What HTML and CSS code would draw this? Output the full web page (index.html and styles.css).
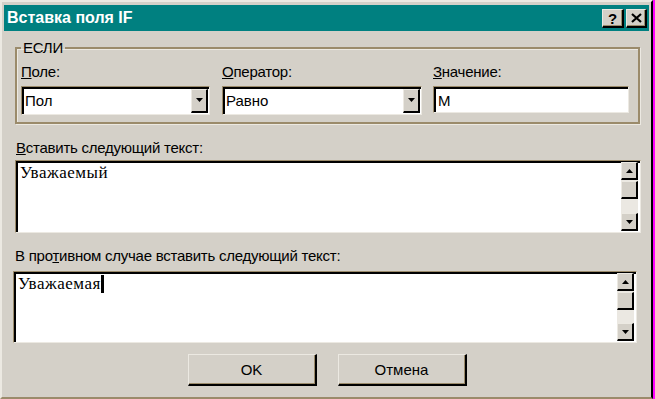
FILE: index.html
```html
<!DOCTYPE html>
<html lang="ru">

<head>
    <meta charset="UTF-8">
    <title>Вставка поля IF</title>
    <link rel="stylesheet" href="styles.css">
</head>

<body>
    <div class="screen">
        <div class="window">
            <div class="titlebar">
                <span class="title">Вставка поля IF</span>
                <div class="title-buttons">
                    <button class="tbtn tbtn-help">?</button>
                    <button class="tbtn tbtn-close">
                        <svg width="11" height="10" viewBox="0 0 11 10">
                            <path d="M1 1 L10 9 M10 1 L1 9" stroke="#000" stroke-width="2.2" fill="none" />
                        </svg>
                    </button>
                </div>
            </div>

            <div class="dialog-body">
                <fieldset class="group">
                    <legend>ЕСЛИ</legend>
                    <div class="fields">
                        <div class="field">
                            <label><u>П</u>оле:</label>
                            <div class="combo sunken">
                                <span class="combo-value">Пол</span>
                                <span class="drop-btn">
                                    <svg width="7" height="4" viewBox="0 0 7 4"><path d="M0 0 H7 L3.5 4 Z" fill="#000" /></svg>
                                </span>
                            </div>
                        </div>
                        <div class="field">
                            <label><u>О</u>ператор:</label>
                            <div class="combo sunken">
                                <span class="combo-value">Равно</span>
                                <span class="drop-btn">
                                    <svg width="7" height="4" viewBox="0 0 7 4"><path d="M0 0 H7 L3.5 4 Z" fill="#000" /></svg>
                                </span>
                            </div>
                        </div>
                        <div class="field">
                            <label><u>З</u>начение:</label>
                            <div class="edit sunken">М</div>
                        </div>
                    </div>
                </fieldset>

                <label class="block-label label-then"><u>В</u>ставить следующий текст:</label>
                <div class="memo memo-then sunken">
                    <div class="memo-text">Уважаемый</div>
                    <div class="scrollbar">
                        <span class="sb-btn">
                            <svg width="7" height="4" viewBox="0 0 7 4"><path d="M0 4 H7 L3.5 0 Z" fill="#000" /></svg>
                        </span>
                        <span class="sb-btn sb-thumb"></span>
                        <span class="sb-track"></span>
                        <span class="sb-btn">
                            <svg width="7" height="4" viewBox="0 0 7 4"><path d="M0 0 H7 L3.5 4 Z" fill="#000" /></svg>
                        </span>
                    </div>
                </div>

                <label class="block-label label-else">В про<u>т</u>ивном случае вставить следующий текст:</label>
                <div class="memo memo-else sunken">
                    <div class="memo-text">Уважаемая<span class="caret"></span></div>
                    <div class="scrollbar">
                        <span class="sb-btn">
                            <svg width="7" height="4" viewBox="0 0 7 4"><path d="M0 4 H7 L3.5 0 Z" fill="#000" /></svg>
                        </span>
                        <span class="sb-btn sb-thumb"></span>
                        <span class="sb-track"></span>
                        <span class="sb-btn">
                            <svg width="7" height="4" viewBox="0 0 7 4"><path d="M0 0 H7 L3.5 4 Z" fill="#000" /></svg>
                        </span>
                    </div>
                </div>

                <div class="actions">
                    <button class="btn">OK</button>
                    <button class="btn">Отмена</button>
                </div>
            </div>
        </div>
    </div>
</body>

</html>
```

FILE: styles.css
```css
body {
    margin: 0;
    padding: 0;
    font-family: 'Liberation Sans', Arial, sans-serif;
    font-size: 15px;
    letter-spacing: -0.25px;
    color: #000;
    background-color: #d4d0c8;
}

.screen {
    width: 655px;
    height: 399px;
    display: flex;
    border-right: 2px solid #ff00ff;
    box-sizing: border-box;
}

.window {
    width: 653px;
    height: 399px;
    box-sizing: border-box;
    background-color: #d4d0c8;
    border-top: 2px solid #ece9e2;
    border-left: 2px solid #ece9e2;
    border-right: 2px solid #000;
    border-bottom: 2px solid #9b8b6b;
    padding: 3px 2px 0 2px;
    display: flex;
    flex-direction: column;
}

.titlebar {
    height: 26px;
    background-color: #008080;
    display: flex;
    align-items: center;
    justify-content: space-between;
    padding: 0 2px 0 3px;
}

.title {
    color: #fff;
    font-weight: bold;
    font-size: 16px;
    letter-spacing: 0;
}

.title-buttons {
    display: flex;
    gap: 2px;
    margin-top: 1px;
}

.tbtn {
    width: 22px;
    height: 19px;
    padding: 0;
    margin: 0;
    background-color: #d4d0c8;
    border-style: solid;
    border-width: 1px 2px 2px 1px;
    border-color: #ece9e2 #000 #000 #ece9e2;
    box-shadow: inset -1px -1px 0 #9b8b6b;
    display: flex;
    align-items: center;
    justify-content: center;
    font-family: 'Liberation Sans', Arial, sans-serif;
    font-weight: bold;
    font-size: 15px;
    line-height: 1;
}

.tbtn-close {
    width: 21px;
}

.dialog-body {
    padding: 9px 10px 0 11px;
    display: flex;
    flex-direction: column;
    align-items: flex-start;
}

.group {
    width: 624px;
    box-sizing: border-box;
    margin: 0;
    padding: 7px 9px 7px 4px;
    border: 2px solid #9b8b6b;
    box-shadow: inset 1px 1px 0 #ece9e2, 1px 1px 0 #ece9e2;
}

.group legend {
    padding: 0 2px;
    line-height: 16px;
}

.fields {
    display: grid;
    grid-template-columns: 189px 200px 195px;
    column-gap: 12px;
    align-items: start;
}

.fields .field:last-child {
    margin-left: -1px;
}

.field label {
    display: block;
    line-height: 17px;
    margin-bottom: 6px;
}

.sunken {
    box-sizing: border-box;
    background-color: #fff;
    border: 1px solid;
    border-color: #9b8b6b #ece9e2 #ece9e2 #9b8b6b;
    box-shadow: inset 2px 2px 0 #000;
}

.combo {
    height: 29px;
    display: flex;
    align-items: center;
    padding: 2px 1px 2px 3px;
}

.combo-value {
    flex: 1;
    letter-spacing: 0;
}

.drop-btn {
    width: 17px;
    height: 24px;
    box-sizing: border-box;
    background-color: #d4d0c8;
    border-style: solid;
    border-width: 1px 2px 2px 1px;
    border-color: #ece9e2 #000 #000 #ece9e2;
    display: flex;
    align-items: center;
    justify-content: center;
}

.edit {
    height: 27px;
    padding: 1px 3px 0 4px;
    display: flex;
    align-items: center;
}

.block-label {
    line-height: 17px;
}

.label-then {
    margin-top: 15px;
    margin-left: 1px;
}

.label-else {
    margin-top: 14px;
}

.memo {
    display: flex;
    padding: 0 2px 1px 3px;
}

.memo-then {
    width: 626px;
    height: 73px;
    margin-top: 4px;
}

.memo-else {
    width: 624px;
    height: 72px;
    margin-top: 7px;
    margin-left: -2px;
}

.memo-text {
    flex: 1;
    font-family: 'Liberation Serif', 'Times New Roman', serif;
    font-size: 17px;
    letter-spacing: 0.5px;
    line-height: 19px;
    padding: 2px 0 0 1px;
}

.caret {
    display: inline-block;
    width: 3px;
    height: 18px;
    background-color: #000;
    vertical-align: -4px;
}

.scrollbar {
    width: 17px;
    margin-top: 1px;
    display: flex;
    flex-direction: column;
    background-color: #ebe8e2;
}

.sb-btn {
    height: 18px;
    box-sizing: border-box;
    background-color: #d4d0c8;
    border-style: solid;
    border-width: 1px 2px 2px 1px;
    border-color: #ece9e2 #000 #000 #ece9e2;
    display: flex;
    align-items: center;
    justify-content: center;
}

.sb-thumb {
    margin-top: 1px;
}

.sb-track {
    flex: 1;
}

.actions {
    align-self: stretch;
    display: flex;
    justify-content: center;
    gap: 21px;
    margin-top: 11px;
}

.btn {
    width: 129px;
    height: 32px;
    padding: 0;
    background-color: #d4d0c8;
    border-style: solid;
    border-width: 1px 2px 2px 1px;
    border-color: #ece9e2 #000 #000 #ece9e2;
    box-shadow: inset -1px -1px 0 #9b8b6b;
    font-family: 'Liberation Sans', Arial, sans-serif;
    font-size: 15px;
    color: #000;
}
```
